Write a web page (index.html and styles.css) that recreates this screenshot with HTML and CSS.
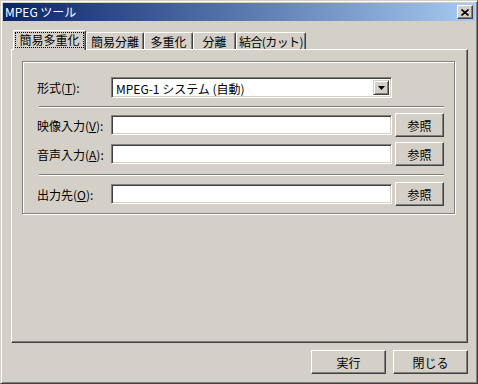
FILE: index.html
```html
<!DOCTYPE html>
<html lang="ja">
<head>
  <meta charset="UTF-8">
  <title>MPEG ツール</title>
  <link rel="stylesheet" href="styles.css">
</head>
<body>
  <div class="window">
    <div class="titlebar">
      <span class="title">MPEG ツール</span>
      <div class="close">
        <svg width="8" height="7" viewBox="0 0 8 7"><path d="M0.5 0.5 L7.5 6.5 M7.5 0.5 L0.5 6.5" stroke="#000" stroke-width="1.6" fill="none"/></svg>
      </div>
    </div>

    <div class="client">
      <div class="tabs">
        <div class="tab active t1"><span class="focus">簡易多重化</span></div>
        <div class="tab t2">簡易分離</div>
        <div class="tab t3">多重化</div>
        <div class="tab t4">分離</div>
        <div class="tab t5">結合(カット)</div>
      </div>

      <div class="panel">
        <div class="group">
          <div class="row combo-row">
            <span class="label">形式(<u>T</u>):</span>
            <div class="combo">
              <span class="combo-text">MPEG-1 システム (自動)</span>
              <span class="combo-btn">
                <svg width="7" height="4" viewBox="0 0 7 4"><path d="M0 0 H7 L3.5 4 Z" fill="#000"/></svg>
              </span>
            </div>
          </div>
          <div class="sep"></div>
          <div class="row video">
            <span class="label">映像入力(<u>V</u>):</span>
            <div class="field"></div>
            <div class="btn ref">参照</div>
          </div>
          <div class="row audio">
            <span class="label">音声入力(<u>A</u>):</span>
            <div class="field"></div>
            <div class="btn ref">参照</div>
          </div>
          <div class="sep sep2"></div>
          <div class="row output">
            <span class="label">出力先(<u>O</u>):</span>
            <div class="field"></div>
            <div class="btn ref">参照</div>
          </div>
        </div>
      </div>

      <div class="actions">
        <div class="btn action">実行</div>
        <div class="btn action">閉じる</div>
      </div>
    </div>
  </div>
</body>
</html>
```

FILE: styles.css
```css
* {
  box-sizing: border-box;
}
body {
  margin: 0;
  background: #d4d0c8;
  font-family: "Noto Sans CJK JP", "Noto Sans", sans-serif;
  font-size: 12px;
  color: #000;
}
.window {
  width: 478px;
  height: 384px;
  display: flex;
  flex-direction: column;
  padding: 2px;
  border: 1px solid;
  border-color: #d4d0c8 #404040 #404040 #d4d0c8;
  box-shadow: inset 1px 1px #fff, inset -1px -1px #808080;
  background: #d4d0c8;
}
.titlebar {
  height: 18px;
  display: flex;
  align-items: center;
  justify-content: space-between;
  padding: 0 2px;
  background: linear-gradient(to right, #0a246a, #a6caf0);
  color: #fff;
}
.title {
  line-height: 18px;
}
.close {
  width: 16px;
  height: 14px;
  display: flex;
  align-items: center;
  justify-content: center;
  background: #d4d0c8;
  border: 1px solid;
  border-color: #fff #404040 #404040 #fff;
  box-shadow: inset -1px -1px #808080;
}
.client {
  flex: 1;
  display: flex;
  flex-direction: column;
  padding: 9px 7px 0 8px;
}

/* tabs */
.tabs {
  display: flex;
  align-items: flex-end;
  padding-left: 2px;
}
.tab {
  height: 17px;
  display: flex;
  align-items: center;
  justify-content: center;
  line-height: 15px;
  white-space: nowrap;
  border-top: 1px solid #fff;
  border-left: 1px solid #fff;
  border-right: 1px solid #404040;
  box-shadow: inset -1px 0 #808080;
  border-radius: 2px 2px 0 0;
}
.tab.active {
  position: relative;
  z-index: 1;
  height: 20px;
  margin-bottom: -1px;
  padding-bottom: 2px;
  background: #d4d0c8;
}
.focus {
  display: block;
  height: 16px;
  line-height: 14px;
  padding: 0 3px;
  border: 1px dotted #000;
}
.t1 { width: 73px; }
.t2 { width: 58px; }
.t3 { width: 49px; }
.t4 { width: 43px; }
.t5 {
  width: 70px;
  letter-spacing: -0.6px;
}

.panel {
  height: 294px;
  border-top: 1px solid #fff;
  border-left: 1px solid #fff;
  border-right: 1px solid #404040;
  border-bottom: 1px solid #404040;
  box-shadow: inset -1px -1px #808080;
  padding: 11px 0 0 10px;
}
.group {
  width: 433px;
  height: 153px;
  border: 1px solid #808080;
  box-shadow: inset 1px 1px #fff, 1px 1px #fff;
  padding: 15px 10px 0 14px;
  display: flex;
  flex-direction: column;
}
.row {
  display: flex;
  align-items: center;
  height: 24px;
}
.combo-row {
  height: 21px;
}
.video {
  margin-top: 5px;
}
.audio {
  margin-top: 5px;
}
.output {
  margin-top: 6px;
}
.label {
  width: 74px;
  white-space: nowrap;
}
.label u {
  text-underline-offset: 1px;
}
.sep {
  height: 2px;
  margin: 8px 0 0 2px;
  border-top: 1px solid #808080;
  border-bottom: 1px solid #fff;
}
.field,
.combo {
  width: 281px;
  height: 20px;
  background: #fff;
  border: 1px solid;
  border-color: #808080 #fff #fff #808080;
  box-shadow: inset 1px 1px #404040, inset -1px -1px #d4d0c8;
}
.combo {
  height: 21px;
  display: flex;
  align-items: stretch;
  padding: 2px;
}
.combo-text {
  flex: 1;
  padding-left: 2px;
  line-height: 17px;
  white-space: nowrap;
}
.combo-btn {
  width: 16px;
  display: flex;
  align-items: center;
  justify-content: center;
  background: #d4d0c8;
  border: 1px solid;
  border-color: #d4d0c8 #404040 #404040 #d4d0c8;
  box-shadow: inset 1px 1px #fff, inset -1px -1px #808080;
}
.btn {
  height: 24px;
  display: flex;
  align-items: center;
  justify-content: center;
  background: #d4d0c8;
  border: 1px solid;
  border-color: #fff #404040 #404040 #fff;
  box-shadow: inset -1px -1px #808080;
}
.ref {
  width: 49px;
  margin-left: 3px;
}
.actions {
  display: flex;
  justify-content: flex-end;
  gap: 7px;
  margin-top: 7px;
}
.action {
  width: 75px;
}
```
